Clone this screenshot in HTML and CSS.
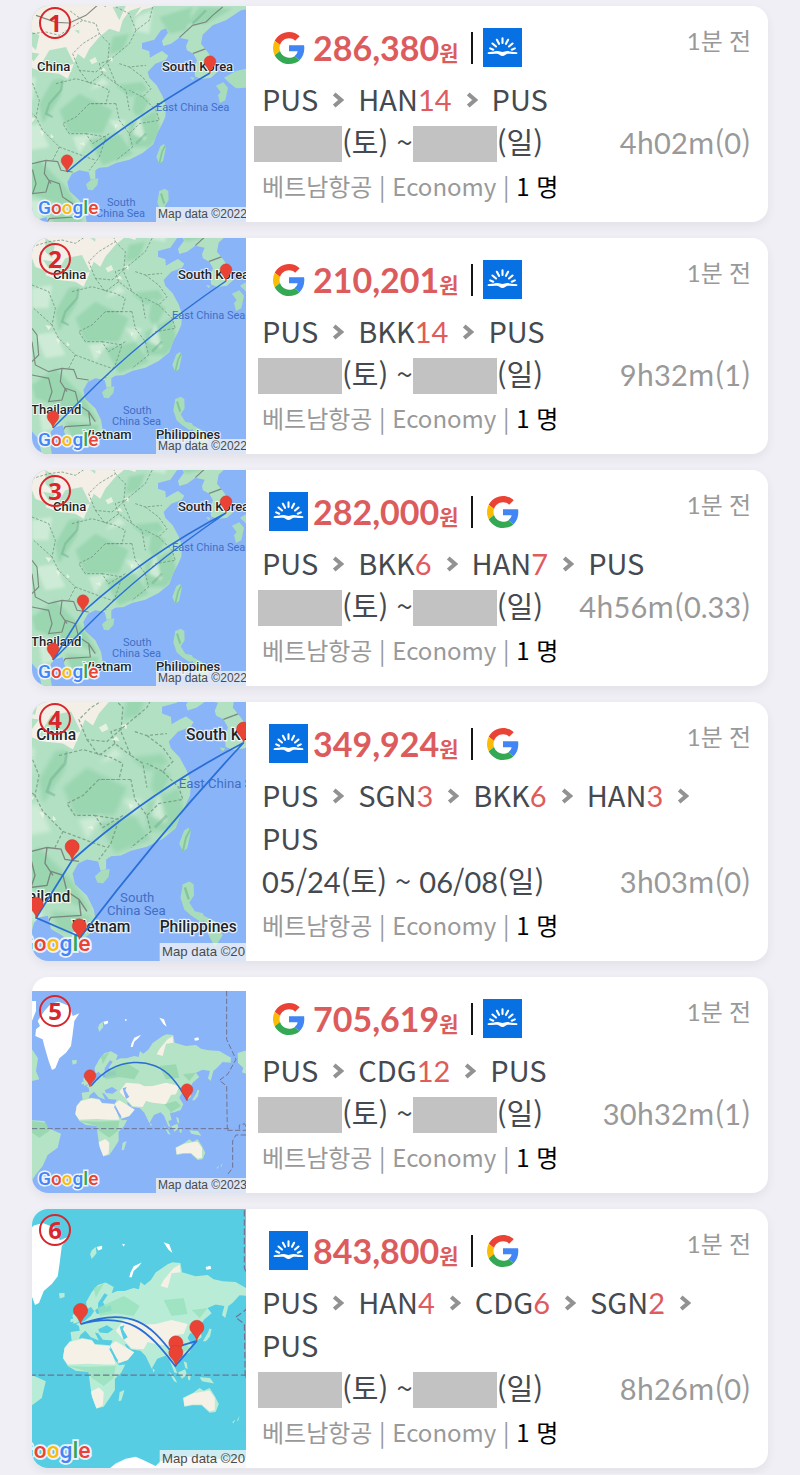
FILE: index.html
```html
<!DOCTYPE html>
<html lang="ko">
<head>
<meta charset="utf-8">
<meta name="viewport" content="width=device-width, initial-scale=1">
<title>항공권</title>
<link rel="stylesheet" href="styles.css">
</head>
<body>
<svg class="sprite" aria-hidden="true">
  <defs>
    <filter id="soft" x="-10%" y="-10%" width="120%" height="120%"><feGaussianBlur stdDeviation="5"/></filter>
    <symbol id="google" viewBox="0 0 48 48">
      <path fill="#EA4335" d="M24 9.5c3.54 0 6.71 1.22 9.21 3.6l6.85-6.85C35.9 2.38 30.47 0 24 0 14.62 0 6.51 5.38 2.56 13.22l7.98 6.19C12.43 13.72 17.74 9.5 24 9.5z"/>
      <path fill="#4285F4" d="M46.98 24.55c0-1.57-.15-3.09-.38-4.55H24v9.02h12.94c-.58 2.96-2.26 5.48-4.78 7.18l7.73 6c4.51-4.18 7.09-10.36 7.09-17.65z"/>
      <path fill="#FBBC05" d="M10.53 28.59A14.5 14.5 0 0 1 9.77 24c0-1.6.27-3.14.76-4.59l-7.98-6.19A23.9 23.9 0 0 0 0 24c0 3.88.92 7.54 2.56 10.78l7.97-6.19z"/>
      <path fill="#34A853" d="M24 48c6.48 0 11.93-2.13 15.89-5.81l-7.73-6c-2.15 1.45-4.92 2.3-8.16 2.3-6.26 0-11.57-4.22-13.47-9.91l-7.98 6.19C6.51 42.62 14.62 48 24 48z"/>
    </symbol>
    <symbol id="sky" viewBox="0 0 39 39">
      <path fill="#0770e3" d="M0 0h39v39H0z"/>
      <path fill="none" stroke="#fff" stroke-width="2.1" stroke-linecap="round" d="M19.5 10.3v4.700M13.900 11.800l2.100 4M25.100 11.800L23 15.800M9.500 15.500l3.500 3M29.500 15.500l-3.500 3M7.200 20.400l3 1.300M31.800 20.400l-3 1.300"/>
      <path fill="#fff" d="M5.300 24.200c5.200-.2 7.200-1.100 9.400-1.100 2 0 3 .9 4.800.9s2.800-.9 4.800-.9c2.200 0 4.200.9 9.400 1.100.9.1 1 1.900 0 1.900-4 0-7-.7-9-.4-2 .4-3 2.300-5.200 2.300s-3.200-1.900-5.200-2.300c-2-.3-5 .4-9 .4-1 0-.9-1.800 0-1.900z"/>
    </symbol>
    <symbol id="chevron" viewBox="0 0 12 16"><path d="M2.200 2L9.200 8l-7 6" fill="none" stroke="#929294" stroke-width="4"/></symbol>

    <path id="pin" fill="#ea4335" stroke="#c5352b" stroke-width=".4" d="M0 0C-.8-3.500-2.500-5-4.500-7.500a5.900 5.900 0 1 1 9 0C2.500-5 .8-3.500 0 0z"/>

    <g id="asia">
      <path fill="#8ab4f8" d="M-20-40h270v280H-20z"/>
      <g transform="translate(3.330 -29.670) scale(.3333)">
        <clipPath id="mainland"><path d="M-40-40H720V20L665 30 620 60 580 75 550 103 545 130 565 155 588 190 594 215 575 232 545 236 527 228 525 200 533 180 522 160 503 150 500 138 508 118 480 112 455 130 432 137 428 122 446 97 440 84 425 90 405 118 368 128 368 145 390 153 392 172 412 160 428 152 447 166 440 178 408 190 385 215 390 232 412 255 430 288 440 318 438 350 428 372 414 398 402 432 370 458 330 478 290 488 265 500 240 502 228 510 228 535 214 538 208 515 180 510 158 520 144 545 150 572 180 600 197 634 202 664 187 696 161 716 138 720 119 701 90 684 82 651 61 655 48 668 42 690 50 740 20 740 8 690-14 665-40 640z"/></clipPath>
        <g clip-path="url(#mainland)">
          <path fill="#b2e0c3" d="M-40-40H720V760H-40z"/>
          <g filter="url(#soft)" fill="#9ad6b0">
            <path d="M60 310L100 240 130 235 125 285 90 340 70 370zM120 330L180 280 280 330 250 400 150 400zM330 370L410 330 425 400 390 440 330 440zM210 420L300 400 340 460 250 495zM540 20L640 25 560 70 500 70zM420 50L520 20 500 90 450 100zM-10 530L60 480 140 560 190 640 120 610 60 590 0 570zM90 640L190 650 180 700 110 690zM290 255L370 245 385 270 330 290zM350 270L340 330 360 360 390 300zM280 110L330 100 310 150 270 160z"/>
          </g>
          <g filter="url(#soft)" fill="#cdebd6">
            <path d="M0 380L60 370 90 440 30 450zM-10 240L50 230 40 300-10 300zM270 360L320 360 300 400zM160 410L220 400 180 460zM350 50L400 30 390 100 340 90zM10 600L60 600 70 660 20 670zM360 340L340 400 380 420zM210 270L250 230 270 250z"/>
          </g>
          <path fill="#f3efe7" d="M-40-40H440L400 20 370 28 345 50 365 20 330 32 310 60 300 95 270 85 240 110 210 145 195 175 175 160 160 200 145 235 120 220 70 215 30 200 60 160-10 150zM-10 150L20 150 50 195 0 175z"/>
          <path fill="#b4e1c5" d="M60 200L90 150 140 140 165 190 130 200 100 215zM280 20L320 15 300 60zM30 90L60 105 50 150 30 130zM165 90l15 0 0 10z"/>
          <path fill="#e6f1df" d="M210 180l18-10 6 14-16 8zM240 210l14-8 8 12zM60 390l14 4-4 14zM95 400l8 10-10 6zM30 350l18 4-8 12zM285 370l12 5-9 9zM180 430l14-5 3 11zM265 175l16-5-2 14z"/>
          <path fill="none" stroke="#6fae8b" stroke-width="7" opacity=".45" d="M130 240L125 270 90 310 80 340 100 350M380 400L350 430M560 30L520 70"/>
          <path fill="none" stroke="#6c8f7b" stroke-width="3" stroke-dasharray="8 5" opacity=".75" d="M-10 115L40 100 80 95 120 105 150 85 190 60 230 70 240 100 190 130 160 160 180 210 230 215 270 180 330 130 350 90 390 60 400 20M240 100L270 130 265 190 290 250 320 270 330 330M180 210L210 250 250 220 290 250M350 90L330 40 290 20M110 250L170 235 240 255 270 270 260 310 210 310 170 350 130 370 150 400 200 400 220 430 270 400M-10 230L40 250 60 300 50 350 70 390 120 440 100 480M330 200L370 230 395 265 370 290 330 270M370 290L410 330 420 360 360 370 330 400 300 360 290 310M330 400L340 440 290 480M200 400L260 410 240 470 210 510M120 440L200 470 230 480M290 310L210 310M300 190L330 200 380 195M-5 300L50 350M250 220L240 190 270 180M190 60L150 30"/>
          <path fill="none" stroke="#758079" stroke-width="3.500" opacity=".9" d="M50 45L110 66 150 68 200 45 240 10 260 18M480 112L520 75 560 65 580 45 610 20M520 160L560 145M-10 400L0 470 40 490 80 480 115 484 125 510 160 515M-10 500L40 510 50 550 40 580 80 575 90 540 120 550 130 590 160 610 165 650 90 655 80 670 90 690M80 480L75 520 95 550M-10 460L10 440 5 380-10 360M160 610L180 640"/>
        </g>
        <g fill="#a9dcbb">
          <path d="M200 552L216 538 237 534 234 554 220 570 206 568zM423 438L434 431 440 440 431 482 420 490 411 470zM420 572L436 565 447 572 448 600 436 618 450 640 470 645 478 662 462 665 440 650 424 636 414 606zM590 256L612 246 626 262 618 300 602 308 596 285 604 275zM614 232L650 212 690 203 740 190V240L700 246 680 262 650 264 628 246zM512 230l14 2-6 8zM470 650L500 665 520 700 500 730 480 690zM440 665L455 680 445 700z"/>
          <path d="M420 490L428 455 438 436" fill="none" stroke="#80c89b" stroke-width="5"/>
          <path d="M425 580L435 610" fill="none" stroke="#7fc79b" stroke-width="6"/>
        </g>
      </g>
      <g class="sea-label">
        <text x="140" y="81">East China Sea</text>
        <text x="91" y="176">South</text>
        <text x="80" y="187">China Sea</text>
      </g>
      <g class="land-label">
        <text x="21" y="41">China</text>
        <text x="146" y="41">South Korea</text>
      </g>
    </g>
    <g id="asia-south" class="land-label">
      <text x="-1" y="176">Thailand</text>
      <text x="51" y="201">Vietnam</text>
      <text x="124" y="201">Philippines</text>
    </g>

    <g id="world" transform="translate(-12.670 -20) scale(.3333)">
      <path class="water" d="M0 0h720v760H0z"/>
      <path class="ice" d="M50 175L62 165 55 150 75 120 95 98 118 92 150 105 160 135 180 127 165 150 160 190 155 225 140 245 120 262 108 292 98 297 88 270 75 225 70 205 48 195zM0 90H50V120L30 170 0 160zM337 216L345 200 365 191 358 200 345 212 340 228 334 228zM420 140l14 5 8 22-10-8zM252 152l14-3 0 8-10 4zM525 202l12-3 2 8-12 2zM316 144l8 2-5 5z"/>
      <path class="ground" d="M190 388L187 365 210 362 208 350 200 345 222 337 238 325 248 310 253 320 290 312 288 298 275 302 268 290 280 272 272 268 256 292 256 305 246 312 238 302 228 308 226 290 240 265 255 247 275 241 295 252 290 268 304 262 322 262 345 255 358 258 362 240 372 248 388 235 400 216 430 195 442 190 462 192 466 215 500 225 530 222 545 233 568 238 600 240 635 260 634 275 610 273 592 292 582 300 574 330 566 322 572 300 550 296 530 305 540 318 520 335 512 350 515 378 504 386 500 368 486 368 480 380 492 400 484 417 466 424 452 426 457 447 447 450 454 468 447 466 434 434 424 424 404 432 390 457 375 425 362 412 338 408 328 396 322 394 330 408 346 415 330 435 306 444 296 418 286 400 292 386 268 384 256 368 248 366 258 386 238 378 224 362 212 372 206 386zM185 388L216 380 240 384 248 395 285 398 295 430 308 448 324 446 314 466 298 482 298 510 285 530 270 552 252 556 240 525 235 490 232 465 200 462 180 450 168 430 172 405zM0 440L40 448 75 450 85 470 125 488 115 530 85 552 70 585 50 610 30 640H0zM468 530L495 516 510 505 520 512 535 505 548 525 558 545 550 565 535 567 515 548 492 548 472 552zM310 515l12-5-8 26-7 2zM192 322l8-4 8 22-14 4zM188 332l6 0-2 8-6 0zM158 268l14-1 0 10-12 4zM655 246L690 236V312L668 304 672 290 656 276zM0 235H38L56 262 50 300 60 325 38 330 0 330zM530 368l5-12 5 2-4 18-10 12-8 0zM432 462l16 18 6 12-8-4zM456 466l18-8 4 14-12 10zM480 470l8 2-2 14-5-2zM510 478l26 2 10 14-30-6zM470 438l8 4 2 16-6-4zM604 585l6-10-4 14zM592 590l8-6-6 10zM240 160l10-8 2 16-12 14-4-12zM392 455l6 6-4 5z"/>
      <path class="desert" d="M185 390L216 382 240 386 248 397 285 400 295 430 300 446 270 446 230 444 180 446 168 430 172 405zM286 398L300 388 334 408 346 416 330 435 308 442zM238 514L258 504 270 515 268 548 252 556 242 530zM300 362L320 335 360 338 376 346 400 345 440 335 480 345 470 370 455 372 440 400 400 395 380 390 370 408 340 406 320 384zM470 530L495 518 520 514 535 512 548 530 548 560 535 563 515 546 492 546 472 550zM412 250L420 235 445 205 460 196 462 215 440 218 430 255z"/>
      <path class="forest" d="M255 305L320 275 345 290 360 300 345 325 300 318 260 325zM420 285L470 280 480 320 440 325zM180 450L235 452 300 450 295 480 270 500 240 480 232 465zM435 400L470 390 485 405 455 424zM38 450L80 455 90 480 60 500 38 485zM490 310L530 305 510 330zM245 255L270 244 250 280z"/>
      <path class="water" d="M256 358L278 348 294 358 280 368 260 366zM310 352L322 348 318 358 330 378 320 384 314 366zM286 404L306 436 302 440 284 408z"/>
      <path class="boundary" d="M38 473H630M622 60V205L650 265 625 310 600 328 622 345 624 475M624 478H680M660 475V462L675 458 682 470M680 492H650L640 510V590L622 615"/>
      <path class="ice" d="M280 710L300 694 325 682 350 677 366 684 400 700 412 688 435 682 470 676 520 680 600 684 640 676 640 710z"/>
    </g>

    <g id="brand">
      <text class="brand" x="6" y="-8"><tspan fill="#4285f4">G</tspan><tspan fill="#ea4335">o</tspan><tspan fill="#fbbc05">o</tspan><tspan fill="#4285f4">g</tspan><tspan fill="#34a853">l</tspan><tspan fill="#ea4335">e</tspan></text>
      <path fill="#f5f5f5" fill-opacity=".75" d="M124-15h90V0h-90z"/>
    </g>
  </defs>
</svg>

<main class="list">
  <article class="card">
    <div class="map">
      <svg viewBox="16 -24 214 216" role="img" aria-label="지도">
        <use href="#asia"/>
        <g transform="translate(16 192)"><use href="#brand"/><text class="credit" x="126" y="-4">Map data ©2022</text></g>
        <path class="route-line" d="M51 142Q105 95 194 43"/>
        <use href="#pin" x="51" y="142"/><use href="#pin" x="194" y="43"/>
      </svg>
      <span class="marker">1</span>
    </div>
    <div class="info">
      <div class="head"><svg class="logo"><use href="#google" x="4" y="4" width="32" height="32"/></svg><strong class="price">286,380<small>원</small></strong><span class="bar"></span><svg class="logo"><use href="#sky"/></svg><time class="ago">1분 전</time></div>
      <div class="route"><span>PUS<svg class="chev"><use href="#chevron"/></svg></span><span>HAN<b>14</b><svg class="chev"><use href="#chevron"/></svg></span><span>PUS</span></div>
      <div class="dates"><span><i class="mask mask-wide"></i>(토) ~ <i class="mask"></i>(일)</span><span class="duration"><b>4</b>h<b>02</b>m(<b>0</b>)</span></div>
      <div class="meta">베트남항공 | Economy | <em>1 명</em></div>
    </div>
  </article>

  <article class="card">
    <div class="map">
      <svg viewBox="0 0 214 216" role="img" aria-label="지도">
        <use href="#asia"/><use href="#asia-south"/>
        <g transform="translate(0 216)"><use href="#brand"/><text class="credit" x="126" y="-4">Map data ©2022</text></g>
        <path class="route-line" d="M21 190L50 161Q110 100 194 43"/>
        <use href="#pin" x="21" y="190"/><use href="#pin" x="194" y="43"/>
      </svg>
      <span class="marker marker-low">2</span>
    </div>
    <div class="info">
      <div class="head"><svg class="logo"><use href="#google" x="4" y="4" width="32" height="32"/></svg><strong class="price">210,201<small>원</small></strong><span class="bar"></span><svg class="logo"><use href="#sky"/></svg><time class="ago">1분 전</time></div>
      <div class="route"><span>PUS<svg class="chev"><use href="#chevron"/></svg></span><span>BKK<b>14</b><svg class="chev"><use href="#chevron"/></svg></span><span>PUS</span></div>
      <div class="dates"><span><i class="mask"></i>(토) ~ <i class="mask"></i>(일)</span><span class="duration"><b>9</b>h<b>32</b>m(<b>1</b>)</span></div>
      <div class="meta">베트남항공 | Economy | <em>1 명</em></div>
    </div>
  </article>

  <article class="card">
    <div class="map">
      <svg viewBox="0 0 214 216" role="img" aria-label="지도">
        <use href="#asia"/><use href="#asia-south"/>
        <g transform="translate(0 216)"><use href="#brand"/><text class="credit" x="126" y="-4">Map data ©2022</text></g>
        <path class="route-line" d="M21 190L50 161Q110 100 194 43Q115 84 51 142L21 190"/>
        <use href="#pin" x="51" y="142"/><use href="#pin" x="21" y="190"/><use href="#pin" x="194" y="43"/>
      </svg>
      <span class="marker marker-low">3</span>
    </div>
    <div class="info">
      <div class="head"><svg class="logo"><use href="#sky"/></svg><strong class="price">282,000<small>원</small></strong><span class="bar"></span><svg class="logo"><use href="#google" x="4" y="4" width="32" height="32"/></svg><time class="ago">1분 전</time></div>
      <div class="route"><span>PUS<svg class="chev"><use href="#chevron"/></svg></span><span>BKK<b>6</b><svg class="chev"><use href="#chevron"/></svg></span><span>HAN<b>7</b><svg class="chev"><use href="#chevron"/></svg></span><span>PUS</span></div>
      <div class="dates"><span><i class="mask"></i>(토) ~ <i class="mask"></i>(일)</span><span class="duration"><b>4</b>h<b>56</b>m(<b>0.33</b>)</span></div>
      <div class="meta">베트남항공 | Economy | <em>1 명</em></div>
    </div>
  </article>

  <article class="card">
    <div class="map">
      <svg viewBox="17.500 9 178.500 216" role="img" aria-label="지도">
        <use href="#asia"/><use href="#asia-south"/>
        <g transform="translate(0 225)"><use href="#brand"/><text class="credit credit-small" x="126" y="-4">Map data ©20</text></g>
        <path class="route-line" d="M51 141Q115 84 194 43Q125 117 58 205L21 189z"/>
        <use href="#pin" x="51" y="141"/><use href="#pin" x="21" y="189"/><use href="#pin" x="57" y="207"/><use href="#pin" x="194" y="43"/>
      </svg>
      <span class="marker">4</span>
    </div>
    <div class="info">
      <div class="head"><svg class="logo"><use href="#sky"/></svg><strong class="price">349,924<small>원</small></strong><span class="bar"></span><svg class="logo"><use href="#google" x="4" y="4" width="32" height="32"/></svg><time class="ago">1분 전</time></div>
      <div class="route"><span>PUS<svg class="chev"><use href="#chevron"/></svg></span><span>SGN<b>3</b><svg class="chev"><use href="#chevron"/></svg></span><span>BKK<b>6</b><svg class="chev"><use href="#chevron"/></svg></span><span>HAN<b>3</b><svg class="chev"><use href="#chevron"/></svg></span><span>PUS</span></div>
      <div class="dates"><span><b>05</b>/<b>24</b>(토) ~ <b>06</b>/<b>08</b>(일)</span><span class="duration"><b>3</b>h<b>03</b>m(<b>0</b>)</span></div>
      <div class="meta">베트남항공 | Economy | <em>1 명</em></div>
    </div>
  </article>

  <article class="card">
    <div class="map">
      <svg viewBox="0 0 214 202" role="img" aria-label="지도">
        <use href="#world"/>
        <g transform="translate(0 202)"><use href="#brand"/><text class="credit" x="126" y="-4">Map data ©2023</text></g>
        <path class="route-line" d="M59 95C83 65 121 65 140 87Q148 96 155 109"/>
        <use href="#pin" x="58" y="96"/><use href="#pin" x="155" y="110"/>
      </svg>
      <span class="marker marker-inset">5</span>
    </div>
    <div class="info">
      <div class="head"><svg class="logo"><use href="#google" x="4" y="4" width="32" height="32"/></svg><strong class="price">705,619<small>원</small></strong><span class="bar"></span><svg class="logo"><use href="#sky"/></svg><time class="ago">1분 전</time></div>
      <div class="route"><span>PUS<svg class="chev"><use href="#chevron"/></svg></span><span>CDG<b>12</b><svg class="chev"><use href="#chevron"/></svg></span><span>PUS</span></div>
      <div class="dates"><span><i class="mask"></i>(토) ~ <i class="mask"></i>(일)</span><span class="duration"><b>30</b>h<b>32</b>m(<b>1</b>)</span></div>
      <div class="meta">베트남항공 | Economy | <em>1 명</em></div>
    </div>
  </article>

  <article class="card">
    <div class="map map-teal">
      <svg viewBox="17.500 -1 178.500 216" role="img" aria-label="지도">
        <use href="#world"/>
        <g transform="translate(0 215)"><use href="#brand"/><text class="credit credit-small" x="126" y="-4">Map data ©20</text></g>
        <path class="route-line" d="M58 95C98 84 114 100 137 130L155 109M58 95C102 79 118 99 132 116L155 109"/>
        <use href="#pin" x="58" y="95"/><use href="#pin" x="155" y="109"/><use href="#pin" x="137.500" y="122"/><use href="#pin" x="137.500" y="130"/>
      </svg>
      <span class="marker marker-low">6</span>
    </div>
    <div class="info">
      <div class="head"><svg class="logo"><use href="#sky"/></svg><strong class="price">843,800<small>원</small></strong><span class="bar"></span><svg class="logo"><use href="#google" x="4" y="4" width="32" height="32"/></svg><time class="ago">1분 전</time></div>
      <div class="route"><span>PUS<svg class="chev"><use href="#chevron"/></svg></span><span>HAN<b>4</b><svg class="chev"><use href="#chevron"/></svg></span><span>CDG<b>6</b><svg class="chev"><use href="#chevron"/></svg></span><span>SGN<b>2</b><svg class="chev"><use href="#chevron"/></svg></span><span>PUS</span></div>
      <div class="dates"><span><i class="mask"></i>(토) ~ <i class="mask"></i>(일)</span><span class="duration"><b>8</b>h<b>26</b>m(<b>0</b>)</span></div>
      <div class="meta">베트남항공 | Economy | <em>1 명</em></div>
    </div>
  </article>
</main>
</body>
</html>
```
FILE: styles.css
```css
* { box-sizing: border-box; }

body {
  margin: 0;
  background: #f0eff5;
  color: #454950;
  font-family: Lato, "Noto Sans CJK KR", sans-serif;
}

.sprite { position: absolute; width: 0; height: 0; }

.list {
  display: flex;
  flex-direction: column;
  gap: 16px;
  padding: 6px 32px;
}

.card {
  display: grid;
  grid-template-columns: 214px 1fr;
  overflow: hidden;
  border-radius: 16px;
  background: #fff;
  box-shadow: 0 4px 10px rgba(60, 60, 90, .07);
}

.map {
  --water: #8ab4f8;
  --ground: #b4e3c6;
  --forest: #94d5ac;
  --desert: #f5f1e6;
  position: relative;
  display: flex;
  align-items: flex-end;
}

.map-teal {
  --water: #56cde2;
  --ground: #b9ecd6;
  --forest: #98e2bd;
}

.map svg { display: block; width: 100%; height: auto; }

.water { fill: var(--water); }
.ground { fill: var(--ground); }
.forest { fill: var(--forest); opacity: .8; }
.desert { fill: var(--desert); }
.ice { fill: #fff; }

.boundary {
  fill: none;
  stroke: #6f7391;
  stroke-width: 3;
  stroke-dasharray: 16 7;
}

.map-teal .boundary { stroke: #4e8790; }

.route-line {
  fill: none;
  stroke: #2a6fd6;
  stroke-width: 1.5;
}

.sea-label {
  font: 11px Roboto, sans-serif;
  fill: #3f6fc6;
}

.land-label {
  font: 500 13px Roboto, sans-serif;
  fill: #1d2529;
  stroke: #fff;
  stroke-width: 2px;
  stroke-opacity: .8;
  paint-order: stroke;
}

.brand {
  font: 500 19px Roboto, sans-serif;
  stroke: #eef3fb;
  stroke-width: 3px;
  paint-order: stroke;
}

.credit {
  font: 12px "Liberation Sans", sans-serif;
  fill: #4a4a4a;
}

.credit-small { font-size: 11px; }

.marker {
  position: absolute;
  top: 1px;
  left: 7px;
  width: 32px;
  height: 32px;
  border: 2px solid #d9252c;
  border-radius: 50%;
  color: #d9252c;
  font: bold 24px/28px "Open Sans", sans-serif;
  text-align: center;
}

.marker-low { top: 5px; }
.marker-inset { top: 18px; }

.info {
  min-width: 0;
  padding: 12px 17px 14px 16px;
}

.head {
  display: flex;
  align-items: center;
  height: 59px;
  padding-left: 7px;
}

.logo { flex: none; width: 39px; height: 39px; }

.price {
  margin-left: 5px;
  padding-top: 5px;
  color: #dc5c5d;
  font-size: 34px;
  line-height: 40px;
}

.price small { font-size: 21px; }

.bar {
  width: 2px;
  height: 32px;
  margin: 0 10px 0 12px;
  background: #151515;
}

.ago {
  align-self: flex-start;
  margin-left: auto;
  color: #999;
  font-size: 24px;
  line-height: 46px;
}

.route {
  display: flex;
  flex-wrap: wrap;
  font: 400 29px/43px "Noto Sans CJK KR", sans-serif;
}

.route span { height: 43px; }

.route b,
.dates b {
  font-family: Lato, sans-serif;
  font-weight: 400;
}

.route b { color: #e05b5c; }

.chev {
  width: 12px;
  height: 16px;
  margin: 0 14px;
  vertical-align: 3px;
}

.dates {
  display: flex;
  justify-content: space-between;
  height: 43px;
  font: 400 29px/43px "Noto Sans CJK KR", sans-serif;
  white-space: nowrap;
}

.mask {
  display: inline-block;
  width: 84px;
  height: 36px;
  margin-left: -4px;
  background: #c2c2c2;
  vertical-align: -8px;
}

.mask-wide { width: 88px; margin-left: -8px; }
.mask + .mask { margin-left: -8px; }

.duration { color: #999; }

.meta {
  color: #999;
  font: 400 24px/45px "Noto Sans CJK KR", sans-serif;
}

.meta em {
  color: #000;
  font-style: normal;
}
```
